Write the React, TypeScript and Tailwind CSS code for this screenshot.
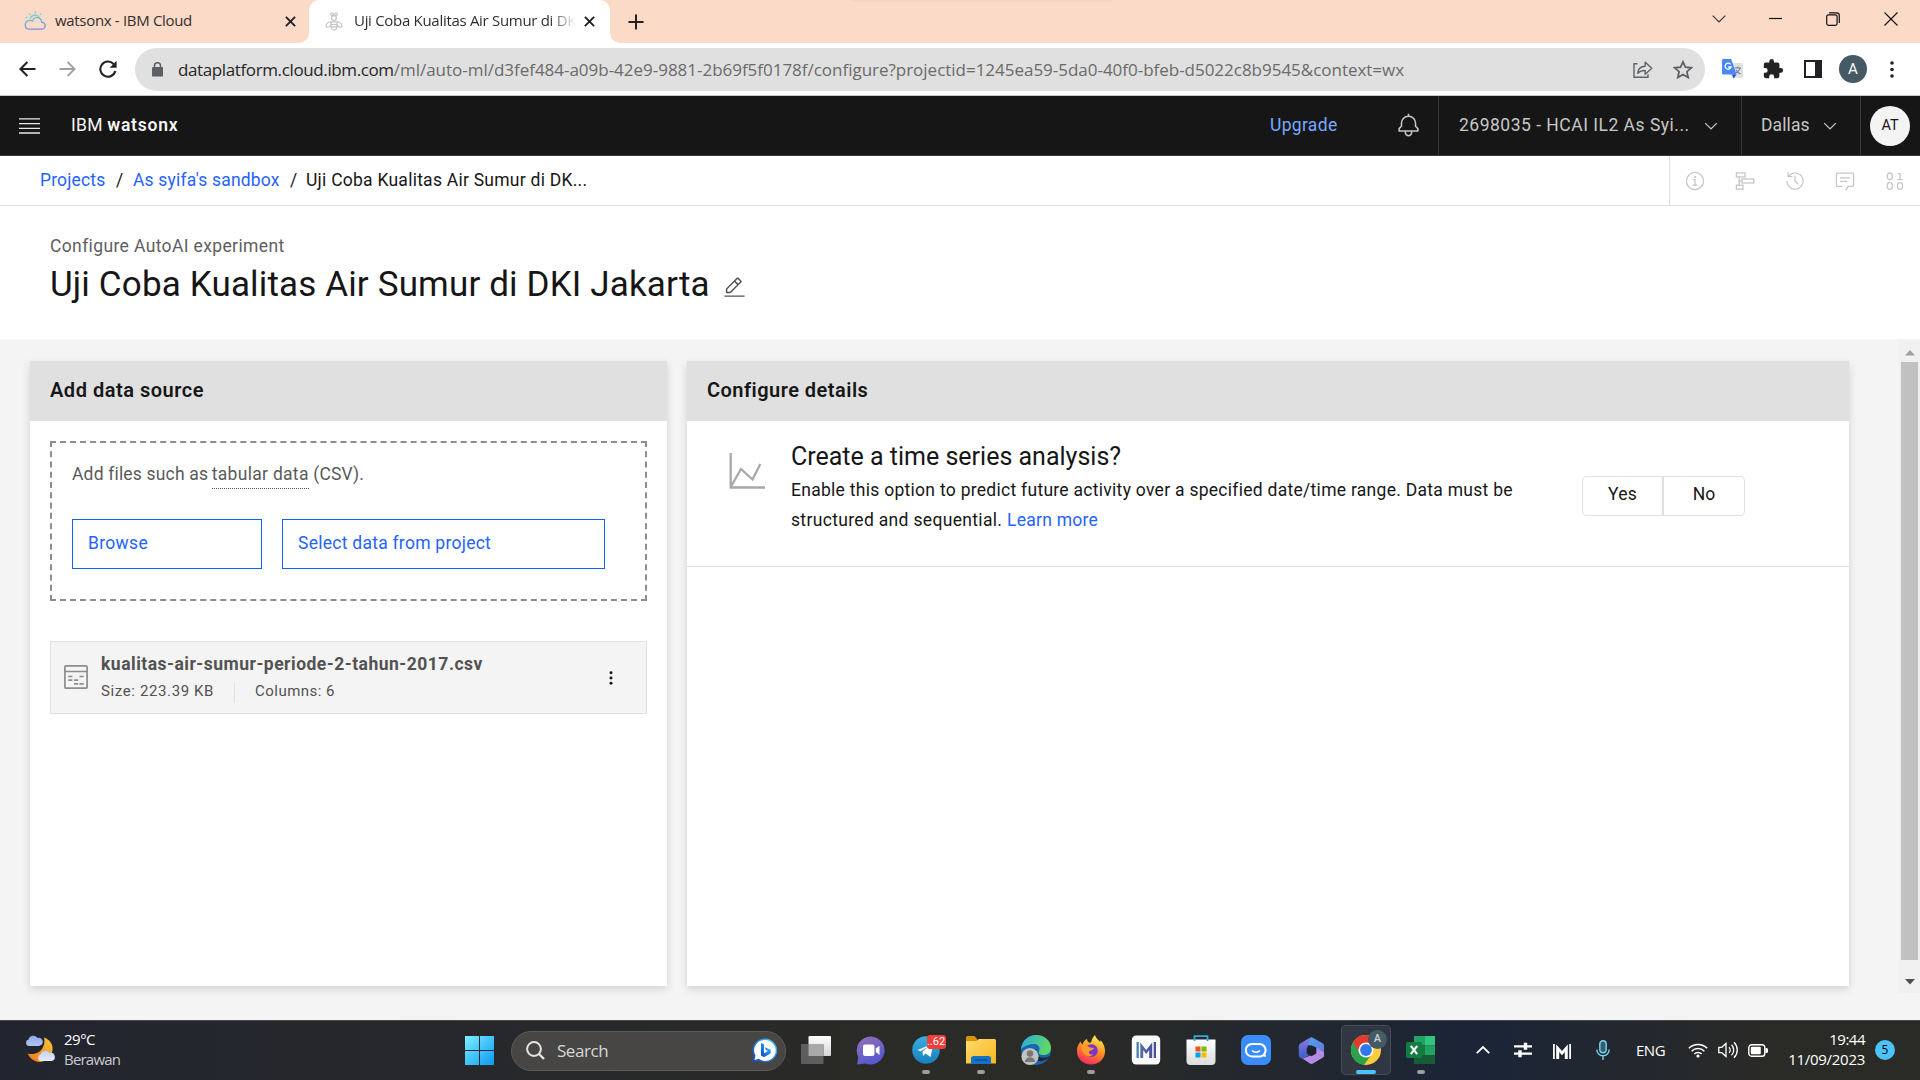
import React from 'react';

type IconProps = { className?: string };

const ChevronDown = ({ className = '' }: IconProps) => (
  <svg viewBox="0 0 16 16" fill="currentColor" className={className}>
    <path d="M8 11L3 6 3.7 5.3 8 9.6 12.3 5.3 13 6z" />
  </svg>
);

const CloseX = ({ className = '' }: IconProps) => (
  <svg viewBox="0 0 10 10" className={className} stroke="#1f1f1f" strokeWidth="1.7">
    <path d="M0.8 0.8l8.4 8.4M9.2 0.8L0.8 9.2" />
  </svg>
);

const Dots = ({ className = '' }: IconProps) => (
  <svg viewBox="0 0 4 18" fill="currentColor" className={className}>
    <circle cx="2" cy="2.2" r="1.9" />
    <circle cx="2" cy="9" r="1.9" />
    <circle cx="2" cy="15.8" r="1.9" />
  </svg>
);

/* ---------- Browser chrome ---------- */

function TabStrip() {
  return (
    <div className="flex h-[43px] items-stretch bg-[#fbdac7]">
      <div className="flex w-[299px] items-center pl-6">
        <svg viewBox="0 0 22 20" className="mb-[2px] h-5 w-[22px]" fill="none" strokeWidth="1.3">
          <defs>
            <linearGradient id="cloud" x1="0" y1="0" x2="0.3" y2="1">
              <stop offset="0" stopColor="#5ac8d8" />
              <stop offset="1" stopColor="#7d8fe0" />
            </linearGradient>
          </defs>
          <path d="M4.5 18.2h13a3.4 3.4 0 0 0 .4-6.8 6 6 0 0 0-1.7-3.7A4.6 4.6 0 0 0 8.6 10a4.3 4.3 0 0 0-4.1-.3 4.3 4.3 0 0 0-3.2 4.5 4 4 0 0 0 3.2 4z" stroke="url(#cloud)" />
          <path d="M6 7.5a5.6 5.6 0 0 1 9-1.8M11.5.6v2M5.3 2.6l1 1.6M1.6 6.2l1.8.9M17.2 2.5l-1 1.5" stroke="#6fd0d6" />
        </svg>
        <span className="mb-[2px] ml-[9px] w-[229px] text-[15px] tracking-[-0.32px] whitespace-nowrap text-[#33302e]">watsonx - IBM Cloud</span>
        <CloseX className="ml-px h-[11px] w-[11px]" />
      </div>
      <div className="flex w-[10px] flex-col justify-end bg-white">
        <div className="h-full rounded-br-[10px] bg-[#fbdac7]" />
      </div>
      <div className="flex w-[301px] items-center rounded-t-[10px] bg-white pl-[15px]">
        <svg viewBox="0 0 20 22" className="mb-px h-[19px] w-5" fill="none" stroke="#c2c2c2" strokeWidth="1.3">
          <circle cx="7.6" cy="2.4" r="1.6" />
          <circle cx="12.4" cy="2.4" r="1.6" />
          <circle cx="10" cy="7" r="2.8" />
          <path d="M6.6 11.5h6.8v6a3.4 3.4 0 0 1-6.8 0zM6.6 14.4h6.8M6.6 17.2h6.8M6.4 11.6C3 11 .9 14 .9 16c0 2.3 4.2 2.4 5.500-1.400M13.6 11.6C17 11 19.100 14 19.100 16c0 2.300-4.200 2.400-5.500-1.400" />
        </svg>
        <span className="mb-[2px] ml-[10px] w-[222px] bg-linear-to-r from-[#2b2b2b] from-88% to-transparent bg-clip-text text-[15px] tracking-[-0.300px] whitespace-nowrap text-transparent">Uji Coba Kualitas Air Sumur di DK</span>
        <CloseX className="ml-[8px] h-[11px] w-[11px]" />
      </div>
      <div className="bg-white">
        <div className="flex h-full items-center rounded-bl-[10px] bg-[#fbdac7] pl-[18px]">
          <svg viewBox="0 0 16 16" className="h-4 w-4" stroke="#222" strokeWidth="2"><path d="M8 0.5v15M.5 8h15" /></svg>
        </div>
      </div>
      <div className="ml-[208px] h-[3px] w-[260px] bg-linear-to-b from-[#f0d0c1] to-[#fbdac7]" />
      <div className="ml-auto flex h-[37px] items-center text-black">
        <svg viewBox="0 0 14 8" className="mr-[43px] h-2 w-3.5" fill="none" stroke="#333" strokeWidth="1.1"><path d="M.7.7L7 7l6.3-6.3" /></svg>
        <svg viewBox="0 0 13 13" className="mr-[44px] h-[13px] w-[13px]" stroke="#111" strokeWidth="1.2"><path d="M0 6.500h13" /></svg>
        <svg viewBox="0 0 14 14" className="mr-[44px] h-3.5 w-3.5" fill="none" stroke="#111" strokeWidth="1.2">
          <rect x=".7" y="2.9" width="10.400" height="10.400" rx="1.800" />
          <path d="M3 .8h7.600a2.700 2.700 0 0 1 2.700 2.700v7.400" />
        </svg>
        <svg viewBox="0 0 14 14" className="mr-[22px] h-3.5 w-3.5" stroke="#111" strokeWidth="1.1"><path d="M.5.5l13 13M13.500.5l-13 13" /></svg>
      </div>
    </div>
  );
}

function Toolbar() {
  return (
    <div className="flex h-[53px] items-center border-b border-[#c9c9c9] bg-white">
      <svg viewBox="0 0 17 16" className="ml-[19px] h-4 w-[17px]" fill="none" stroke="#222" strokeWidth="2"><path d="M16.5 8H1.8M8.4 1L1.4 8l7 7" /></svg>
      <svg viewBox="0 0 17 16" className="ml-[23px] h-4 w-[17px]" fill="none" stroke="#a0a0a0" strokeWidth="1.8"><path d="M.5 8h14.7M8.6 1l7 7-7 7" /></svg>
      <svg viewBox="0 0 18 18" className="ml-[23px] h-[18px] w-[18px]" fill="none" stroke="#222" strokeWidth="2.1">
        <path d="M16.3 11A7.6 7.6 0 1 1 14.6 4" />
        <path d="M17.6.8v6.9h-6.9z" fill="#222" stroke="none" />
      </svg>
      <div className="ml-[18px] flex h-[43px] w-[1570px] items-center rounded-full bg-[#e0e0e0] pl-[17px]">
        <svg viewBox="0 0 11 15" className="h-[15px] w-[11px]">
          <rect y="5" width="11" height="9.6" rx="1.2" fill="#5c5f63" />
          <path d="M2.5 6V3.8a3 3 0 0 1 6 0V6" fill="none" stroke="#5c5f63" strokeWidth="1.5" />
        </svg>
        <div className="mt-px ml-[15px] w-[1450px] text-[17px] whitespace-nowrap text-[#6a6a6a]">
          <span className="tracking-[-0.38px] text-[#262626]">dataplatform.cloud.ibm.com</span>
          <span className="tracking-[-0.02px]">/ml/auto-ml/d3fef484-a09b-42e9-9881-2b69f5f0178f/configure?projectid=1245ea59-5da0-40f0-bfeb-d5022c8b9545&amp;context=wx</span>
        </div>
        <svg viewBox="0 0 20 18" className="ml-[5px] h-[18px] w-5" fill="none" stroke="#5f6368" strokeWidth="1.4">
          <path d="M4.500 3.800H1v13.400h14v-3" />
          <path d="M4.800 13.200c.3-4.200 3-6.700 7.400-6.900V2.300l6.600 6-6.600 6v-3.800c-3.400 0-5.700.8-7.400 2.700z" strokeLinejoin="round" />
        </svg>
        <svg viewBox="0 0 20 19" className="ml-[20px] h-[19px] w-5" fill="none" stroke="#5a5d61" strokeWidth="1.7">
          <path d="M10 1.8l2.4 5.4 5.9.6-4.4 3.9 1.3 5.8-5.2-3.1-5.2 3.1 1.3-5.8L1.7 7.8l5.9-.6z" />
        </svg>
      </div>
      <svg viewBox="0 0 21 20" className="ml-[17px] h-5 w-[21px]">
        <rect x="9" y="4" width="12" height="15" rx="1.4" fill="#dfe1e3" />
        <path d="M12.5 9h6.5M15.700 7.500V9M18 9c-.5 2.600-2.500 4.300-5 5.600M14 11c1 2 2.300 3.200 4.600 4" stroke="#6b7f9c" strokeWidth="1.100" fill="none" />
        <path d="M1.400 0h7.800l5.300 15.500H1.400A1.400 1.400 0 0 1 0 14.100V1.400A1.400 1.400 0 0 1 1.400 0z" fill="#4788f4" />
        <path d="M10 15.500h4.500L11.600 19.500z" fill="#2f50c8" />
        <path d="M8.600 5.400A3 3 0 1 0 9 8H6.300" fill="none" stroke="#fff" strokeWidth="1.300" />
      </svg>
      <svg viewBox="0 0 24 24" className="ml-[19px] h-[22px] w-[22px]" fill="#222">
        <path d="M20.500 11H19V7a2 2 0 0 0-2-2h-4V3.500a2.500 2.500 0 0 0-5 0V5H4a2 2 0 0 0-2 2v3.800h1.500a2.700 2.700 0 0 1 0 5.400H2V20a2 2 0 0 0 2 2h3.800v-1.500a2.700 2.700 0 0 1 5.400 0V22H17a2 2 0 0 0 2-2v-4h1.500a2.500 2.500 0 0 0 0-5z" />
      </svg>
      <div className="ml-[20px] h-[18px] w-[18px] border-2 border-r-[7px] border-[#202124]" />
      <div className="ml-[17px] flex h-7 w-7 items-center justify-center rounded-full bg-[#455a64] font-['Roboto'] text-[15px] text-white">A</div>
      <Dots className="ml-[23px] h-[17px] w-1 text-[#222]" />
    </div>
  );
}

/* ---------- watsonx header ---------- */

function Header() {
  return (
    <header className="flex h-[60px] items-center border-b border-[#393939] bg-[#161616] text-[17.5px] whitespace-nowrap text-[#c6c6c6]">
      <svg viewBox="0 0 21 16" className="ml-[19px] h-4 w-[21px]" stroke="#e8e8e8" strokeWidth="1.300">
        <path d="M0 .9h21M0 5.600h21M0 10.300h21M0 15h21" />
      </svg>
      <div className="ml-[31px] w-[112px] text-[#f4f4f4]">
        <span className="tracking-[0.3px]">IBM</span> <span className="font-semibold tracking-[0.800px]">watsonx</span>
      </div>
      <span className="ml-auto w-[126px] tracking-[0.32px] text-[#78a9ff]">Upgrade</span>
      <svg viewBox="0 0 32 32" fill="currentColor" className="h-[25px] w-[25px]">
        <path d="M28.7071,19.293,26,16.5859V13a10.0136,10.0136,0,0,0-9-9.9492V1H15V3.0508A10.0136,10.0136,0,0,0,6,13v3.5859L3.2929,19.293A1,1,0,0,0,3,20v3a1,1,0,0,0,1,1h7v.7768a5.152,5.152,0,0,0,4.500,5.1987A5.0057,5.0057,0,0,0,21,25V24h7a1,1,0,0,0,1-1V20A1,1,0,0,0,28.7071,19.293ZM19,25a3,3,0,0,1-6,0V24h6Zm8-3H5V20.4141L7.707,17.707A1,1,0,0,0,8,17V13a8,8,0,0,1,16,0v4a1,1,0,0,0,.293.707L27,20.4141Z" />
      </svg>
      <div className="ml-[17px] flex h-full w-[303px] items-center border-l border-[#393939] pl-5">
        <span className="w-[242px] tracking-[0.5px]">2698035 - HCAI IL2 As Syi...</span>
        <ChevronDown className="h-5 w-5" />
      </div>
      <div className="flex h-full w-[119px] items-center border-l border-[#393939] pl-[19px]">
        <span className="w-[59px] tracking-[0.1px]">Dallas</span>
        <ChevronDown className="h-5 w-5" />
      </div>
      <div className="flex h-full w-[60px] items-center border-l border-[#393939] pl-[9px]">
        <div className="flex h-10 w-10 items-center justify-center rounded-full bg-[#f4f4f4] text-[14.500px] text-[#161616]">AT</div>
      </div>
    </header>
  );
}

function Breadcrumbs() {
  return (
    <div className="flex h-[50px] items-stretch border-b border-[#e0e0e0] bg-white text-[17.5px] whitespace-nowrap text-[#161616]">
      <div className="flex flex-1 items-center pl-[40px]">
        <span className="w-[76px] tracking-[0.15px] text-[#2563ff]">Projects</span>
        <span className="w-[17px]">/</span>
        <span className="w-[157px] tracking-[0.17px] text-[#2563ff]">As syifa's sandbox</span>
        <span className="w-[16px]">/</span>
        <span className="tracking-[0.25px]">Uji Coba Kualitas Air Sumur di DK...</span>
      </div>
      <div className="flex w-[251px] items-center gap-[30px] border-l border-[#e0e0e0] pl-[15px] text-[#c6c6c6]">
        <svg viewBox="0 0 20 20" className="h-5 w-5" fill="none" stroke="currentColor" strokeWidth="1.300">
          <circle cx="10" cy="10" r="8.600" />
          <path d="M8.200 8.700H10v5.200M7.600 14.200h4.800" />
          <circle cx="10" cy="5.800" r="1.100" fill="currentColor" stroke="none" />
        </svg>
        <svg viewBox="0 0 20 20" className="h-5 w-5" fill="none" stroke="currentColor" strokeWidth="1.300">
          <rect x="1.400" y="1.900" width="8.600" height="4" />
          <rect x="7" y="8" width="11.800" height="4" />
          <rect x="1.400" y="14.200" width="6.600" height="4" />
          <path d="M4.200 5.900v4.100H7M4.200 10v4.200" />
        </svg>
        <svg viewBox="0 0 32 32" className="h-5 w-5" fill="currentColor">
          <path d="M20.590 22L15 16.410V7h2v8.580l5 5.010z" />
          <path d="M16,2A13.940,13.940,0,0,0,6,6.230V2H4v8h8V8H7.080A12,12,0,1,1,4,16H2A14,14,0,1,0,16,2Z" />
        </svg>
        <svg viewBox="0 0 20 20" className="h-5 w-5" fill="none" stroke="currentColor" strokeWidth="1.300">
          <path d="M7.500 15.300H2.600a1.200 1.200 0 0 1-1.200-1.200V3.400a1.200 1.200 0 0 1 1.200-1.200h14.800a1.200 1.200 0 0 1 1.200 1.200v10.700a1.200 1.200 0 0 1-1.200 1.200h-4.200l-2.500 3.900M5 6.800h10M5 10.400h7" />
        </svg>
        <svg viewBox="0 0 20 20" className="h-5 w-5" fill="none" stroke="currentColor" strokeWidth="1.300">
          <rect x="2.300" y="2" width="5" height="6.600" rx="2.500" />
          <path d="M12.800 2.700h2.300v6M12.400 8.700h5.200" />
          <rect x="2.300" y="11.700" width="5" height="6.600" rx="2.500" />
          <rect x="12.500" y="11.700" width="5" height="6.600" rx="2.500" />
        </svg>
      </div>
    </div>
  );
}

function TitleArea() {
  return (
    <div className="flex h-[133px] flex-col bg-white pl-[50px] whitespace-nowrap">
      <div className="mt-[28px] h-6 text-[17.5px] leading-6 tracking-[0.37px] text-[#5e5e5e]">Configure AutoAI experiment</div>
      <div className="mt-[3px] flex h-[48px] items-center">
        <h1 className="w-[673px] text-[35px] leading-[48px] tracking-[0.15px] text-[#161616]">Uji Coba Kualitas Air Sumur di DKI Jakarta</h1>
        <svg viewBox="0 0 32 32" className="mt-[4px] h-[23px] w-[23px]" fill="#525252">
          <path d="M2 27h28v2H2zM25.400 9c.8-.8.8-2 0-2.800l-3.600-3.600c-.8-.8-2-.8-2.800 0l-15 15V24h6.400L25.400 9zM20.400 4L24 7.600l-3 3L17.400 7l3-3zM6 22v-3.600l10-10 3.600 3.600-10 10H6z" />
        </svg>
      </div>
    </div>
  );
}

/* ---------- Panels ---------- */

function DataSourcePanel() {
  return (
    <section className="flex h-[625px] w-[637px] flex-col bg-white shadow-[0_3px_8px_rgba(0,0,0,0.14)]">
      <div className="flex h-[60px] items-center bg-[#e0e0e0] pb-[2px] pl-5">
        <h2 className="text-[20px] font-semibold tracking-[0.52px] text-[#161616]">Add data source</h2>
      </div>
      <div className="flex flex-col px-5 pt-5">
        <div className="flex h-[160px] flex-col border-2 border-dashed border-[#8d8d8d] pl-5">
          <p className="mt-[19px] h-[29px] text-[17.5px] leading-[24px] tracking-[0.18px] text-[#5a5a5a]">
            Add files such as{' '}
            <span className="-ml-px inline-block h-[27px] border-b border-dotted border-[#525252] tracking-[0.300px]">tabular data</span> (CSV).
          </p>
          <div className="mt-[28px] flex gap-5 text-[17.5px] text-[#2563ff]">
            <button className="h-[50px] w-[190px] border border-[#0f62fe] pb-[2px] pl-[15px] text-left tracking-[0.32px]">Browse</button>
            <button className="h-[50px] w-[323px] border border-[#0f62fe] pb-[2px] pl-[15px] text-left tracking-[0.26px]">Select data from project</button>
          </div>
        </div>
        <div className="mt-10 flex h-[73px] items-center border border-[#e0e0e0] bg-[#f4f4f4] pl-[13px] text-[#525252]">
          <svg viewBox="0 0 24 24" className="mb-px h-6 w-6" fill="none" stroke="#8d8d8d" strokeWidth="1.700">
            <rect x=".9" y=".9" width="22.200" height="22.200" rx="1" />
            <path d="M.8 6.500h22.400M4.200 11.500h4.200M15.500 11.500h4.200M4.200 15.200h4.200M10 15.200h4.200M10 18.900h4.200M15.500 18.900h4.200" />
          </svg>
          <div className="ml-[13px] flex w-[500px] flex-col">
            <span className="text-[17.5px] leading-[26px] font-bold tracking-[0.5px] whitespace-nowrap">kualitas-air-sumur-periode-2-tahun-2017.csv</span>
            <div className="mt-px flex h-[26px] items-center text-[15px]">
              <span className="w-[133px] tracking-[0.62px]">Size: 223.39 KB</span>
              <span className="mt-1 h-5 w-px bg-[#e0e0e0]" />
              <span className="ml-5 tracking-[0.48px]">Columns: 6</span>
            </div>
          </div>
          <Dots className="ml-[8px] h-[14px] w-[4px] text-[#161616]" />
        </div>
      </div>
    </section>
  );
}

function DetailsPanel() {
  return (
    <section className="flex h-[625px] w-[1162px] flex-col bg-white shadow-[0_3px_8px_rgba(0,0,0,0.14)]">
      <div className="flex h-[60px] items-center bg-[#e0e0e0] pb-[2px] pl-5">
        <h2 className="text-[20px] font-semibold tracking-[0.47px] text-[#161616]">Configure details</h2>
      </div>
      <div className="flex h-[146px] border-b border-[#e0e0e0] text-[17.5px] text-[#161616]">
        <svg viewBox="0 0 36 36" className="mt-[32px] ml-[42px] h-9 w-9" fill="none" stroke="#a8a8a8" strokeWidth="2.300">
          <path d="M1.700 0v34.500H36M1.700 34L12 16l11.500 10.500L31.300 11" />
        </svg>
        <div className="ml-[26px] flex w-[740px] flex-col whitespace-nowrap">
          <h3 className="mt-[18px] text-[25px] leading-[36px]">Create a time series analysis?</h3>
          <p className="leading-[30px] tracking-[0.28px]">Enable this option to predict future activity over a specified date/time range. Data must be</p>
          <p className="leading-[30px] tracking-[0.33px]">structured and sequential. <a className="tracking-[0.25px] text-[#2563ff]">Learn more</a></p>
        </div>
        <div className="mt-[55px] ml-[51px] flex h-10 w-[163px] rounded-[5px] border border-[#e0e0e0]">
          <button className="h-full w-[81px] border-r-2 border-[#e0e0e0] pb-[3px] tracking-[0.2px]">Yes</button>
          <button className="h-full w-[80px] pb-[3px]">No</button>
        </div>
      </div>
    </section>
  );
}

function Scrollbar() {
  return (
    <div className="ml-auto flex h-[652px] w-[21px] flex-col items-center bg-[#f0f0f0]">
      <svg viewBox="0 0 10 6" className="mt-[9px] h-[6px] w-[10px]" fill="#a0a0a0"><path d="M5 0l5 5.500H0z" /></svg>
      <div className="mt-[6px] h-[598px] w-[17px] bg-[#c1c1c1]" />
      <svg viewBox="0 0 10 6" className="mt-[19px] h-[6px] w-[10px]" fill="#505050"><path d="M5 5.500L0 0h10z" /></svg>
    </div>
  );
}

/* ---------- Taskbar ---------- */

function AppSlot({ children, running, active }: { children: React.ReactNode; running?: boolean; active?: boolean }) {
  return (
    <div className={active ? 'relative mx-[2.500px] flex h-[50px] w-[50px] items-center justify-center rounded-[5px] border border-white/10 bg-white/8' : 'relative flex h-[50px] w-[55px] items-center justify-center'}>
      {children}
      {running && <span className="absolute bottom-px left-1/2 h-1 w-2 -translate-x-1/2 rounded-full bg-[#9b9b9b]" />}
      {active && <span className="absolute bottom-0 left-1/2 h-1 w-5 -translate-x-1/2 rounded-full bg-[#4cc2ff]" />}
    </div>
  );
}

function Apps() {
  return (
    <div className="mb-px ml-[2.500px] flex items-center">
      <AppSlot>
        <svg viewBox="0 0 30 28" className="h-7 w-[30px]">
          <defs><linearGradient id="tv" x1="0" y1="0" x2="0" y2="1"><stop offset="0" stopColor="#fff" /><stop offset="1" stopColor="#d5d5d5" /></linearGradient></defs>
          <rect x="7.500" width="22.500" height="20" rx="1" fill="url(#tv)" />
          <rect y="8" width="22.500" height="20" rx="1" fill="#5e5e5e" />
          <path d="M7.500 8h15v12h-15z" fill="#a9a9a9" />
        </svg>
      </AppSlot>
      <AppSlot>
        <svg viewBox="0 0 30 29" className="h-[29px] w-[30px]">
          <defs><linearGradient id="chat" x1="0" y1="0" x2="0.500" y2="1"><stop offset="0" stopColor="#9a6fb8" /><stop offset="1" stopColor="#5558cf" /></linearGradient></defs>
          <path d="M15 .5a14 14 0 1 1-5.600 27L1 28.500l1.300-7.500A14 14 0 0 1 15 .5z" fill="url(#chat)" />
          <rect x="7" y="8.500" width="11.500" height="11.500" rx="2" fill="#fff" />
          <path d="M19.800 12.500l3.700-2.800v9.200l-3.700-2.800z" fill="#fff" />
        </svg>
      </AppSlot>
      <AppSlot running>
        <svg viewBox="0 0 28 28" className="h-7 w-7">
          <defs><linearGradient id="tg" x1="0" y1="0" x2="0" y2="1"><stop offset="0" stopColor="#37aee2" /><stop offset="1" stopColor="#1780bd" /></linearGradient></defs>
          <circle cx="14" cy="14" r="13.800" fill="url(#tg)" />
          <path d="M5.500 14L21.500 7.500 18.500 21l-5-3.500-2.500 2.500-.5-4.500L17.500 10 8.500 15.200z" fill="#fff" />
        </svg>
        <span className="absolute top-[10px] left-[28px] h-[14px] w-[19px] rounded-[3px] bg-[#f23d3a] text-center font-['Roboto'] text-[11px] leading-[14px] text-white">..62</span>
      </AppSlot>
      <AppSlot running>
        <svg viewBox="0 0 30 28" className="h-7 w-[30px]">
          <defs><linearGradient id="fold" x1="0" y1="0" x2="1" y2="1"><stop offset="0" stopColor="#ffdb70" /><stop offset="1" stopColor="#f8b51c" /></linearGradient></defs>
          <path d="M0 1.500A1.500 1.500 0 0 1 1.500 0h7l3 3.500V7H0z" fill="#d69305" />
          <path d="M0 5h10.500l2.500-2h15.500A1.500 1.500 0 0 1 30 4.500V27.500H0z" fill="url(#fold)" />
          <path d="M5 28v-5.500A2.500 2.500 0 0 1 7.500 20h15a2.500 2.500 0 0 1 2.500 2.500V28z" fill="#1673c4" />
          <path d="M8.500 24h13" stroke="#0b4f8f" strokeWidth="1.300" />
        </svg>
      </AppSlot>
      <AppSlot>
        <svg viewBox="0 0 32 32" className="h-8 w-8">
          <defs>
            <linearGradient id="edge" x1="0" y1="0" x2="1" y2="0.300"><stop offset="0" stopColor="#2ba7e5" /><stop offset="1" stopColor="#5fd862" /></linearGradient>
          </defs>
          <circle cx="16" cy="16" r="15" fill="#1566b3" />
          <path d="M1 15C2 6 9 1 16 1c9 0 15 6 15 13 0 5-4 7-7 7-4 0-6-1.500-5-3.500 2-4-1-7.500-5-7.500C9 10 4 12 1 15z" fill="url(#edge)" />
          <path d="M31 21c-3 3-9 4-13 1-3-2-3-5-1-7-4 1-5 6-3 9 4 5 12 4 17-3z" fill="#24262a" />
          <circle cx="10" cy="22.500" r="8.600" fill="#c2c2c2" />
          <circle cx="10" cy="19.500" r="3.200" fill="#777" />
          <path d="M4.800 28a5.200 4.700 0 0 1 10.400 0z" fill="#777" />
        </svg>
      </AppSlot>
      <AppSlot running>
        <svg viewBox="0 0 30 32" className="h-8 w-[30px]">
          <defs>
            <linearGradient id="fx" x1="0.700" y1="0" x2="0.300" y2="1"><stop offset="0.100" stopColor="#ffe04a" /><stop offset="0.500" stopColor="#ff8a1e" /><stop offset="1" stopColor="#f5246b" /></linearGradient>
          </defs>
          <path d="M15 30.500C7 30.500 1 25 1 17c0-5 2-7 3.500-9.500.5 1.500 1 2 2 3C7.500 7.500 9 6 11 5c0 2 1 3 3 4 2-1 1.500-5 5-8 .5 3 4 5 5 7 .8-.3.500-2 .5-2C27 9 29 12.500 29 17c0 8-6 13.500-14 13.500z" fill="url(#fx)" />
          <circle cx="15.500" cy="16.500" r="6.300" fill="#7b35c9" />
          <path d="M5 12c4-2 7 0 8 1 1.500 1.200 4 .5 5 1-1 2.500-4 2-5 4-.5 1.500 1 3 4 2.500-4 4-11 1-12-8.500z" fill="#ff9a28" />
        </svg>
      </AppSlot>
      <AppSlot>
        <svg viewBox="0 0 30 30" className="h-[30px] w-[30px]">
          <defs><linearGradient id="mx" gradientUnits="userSpaceOnUse" x1="5" y1="0" x2="25" y2="0"><stop offset="0" stopColor="#4d86ad" /><stop offset="0.500" stopColor="#5058a6" /><stop offset="1" stopColor="#4a4f9c" /></linearGradient></defs>
          <rect x=".8" y=".5" width="28.400" height="29" rx="4.500" fill="#fafafa" />
          <path d="M5.500 7h2.300v16H5.500zM22.700 7H25v16h-2.300zM9.300 7.500l5.900 7.500 6-7.500V23h-3v-8l-3 4-3-4v8h-2.900z" fill="url(#mx)" />
        </svg>
      </AppSlot>
      <AppSlot>
        <svg viewBox="0 0 30 30" className="h-[30px] w-[30px]">
          <defs><linearGradient id="store" x1="0" y1="0" x2="0" y2="1"><stop offset="0" stopColor="#fff" /><stop offset="1" stopColor="#dcdcdc" /></linearGradient></defs>
          <path d="M.5 4.500h29V26a4 4 0 0 1-4 4h-21a4 4 0 0 1-4-4z" fill="url(#store)" />
          <path d="M8.500 6V1.200h13V6" fill="none" stroke="#2aa8e0" strokeWidth="1.800" />
          <path d="M9.500 11.500h5v5h-5z" fill="#f25022" /><path d="M15.500 11.500h5v5h-5z" fill="#7fba00" />
          <path d="M9.500 17.500h5v5h-5z" fill="#00a4ef" /><path d="M15.500 17.500h5v5h-5z" fill="#ffb900" />
        </svg>
      </AppSlot>
      <AppSlot>
        <svg viewBox="0 0 30 30" className="h-[30px] w-[30px]">
          <rect width="30" height="30" rx="7" fill="#3a8df8" />
          <path d="M22 20.300l2 .6-.7-2A6.200 6.200 0 0 0 19 9h-8a6.200 6.200 0 0 0 0 12.400h8.500a7 7 0 0 0 2.500-1.100z" fill="none" stroke="#fff" strokeWidth="2" strokeLinejoin="round" />
          <path d="M11 15.500c2 2.200 6 2.200 8 0" fill="none" stroke="#fff" strokeWidth="1.500" />
        </svg>
      </AppSlot>
      <AppSlot>
        <svg viewBox="0 0 28 30" className="h-[29px] w-[27px]">
          <defs>
            <linearGradient id="m1" x1="0" y1="0" x2="0" y2="1"><stop offset="0" stopColor="#8f7be8" /><stop offset="1" stopColor="#3a5bc8" /></linearGradient>
            <linearGradient id="m2" x1="0" y1="0" x2="1" y2="1"><stop offset="0" stopColor="#48a8ee" /><stop offset="1" stopColor="#6b6ee0" /></linearGradient>
          </defs>
          <path d="M14 1l-4 2-8 5a3 3 0 0 0-1.200 2.500V20a3 3 0 0 0 1.500 2.600L5 24l6-4-1-9z" fill="url(#m1)" />
          <path d="M14 1l11.500 6.500A3 3 0 0 1 27 10v12l-8-5v-5l-9-3z" fill="url(#m2)" />
          <path d="M5 23.500l12-5.500 2-6 8 5v3a3 3 0 0 1-1.500 2.600l-10 6a3 3 0 0 1-3 0z" fill="#b58be6" />
          <path d="M14 9.500l5 3v5.500l-5 3-5-3v-5.500z" fill="#1e2330" />
        </svg>
      </AppSlot>
      <AppSlot active>
        <svg viewBox="0 0 30 30" className="h-[30px] w-[30px]">
          <circle cx="15" cy="15" r="15" fill="#ffcd3a" />
          <path d="M15 15L2 7.500A15 15 0 0 0 13 29.900L21.500 18z" fill="#2ba24c" />
          <path d="M2 7.500A15 15 0 0 1 28 7.500L28.300 8.500H15L9 18z" fill="#e33b2e" />
          <circle cx="15" cy="15" r="7.600" fill="#fff" />
          <circle cx="15" cy="15" r="5.900" fill="#2f79ec" />
        </svg>
        <span className="absolute top-[4px] left-[26px] flex h-[19px] w-[19px] items-center justify-center rounded-full bg-[#455a64] font-['Roboto'] text-[11px] font-medium text-[#c9d0d3]">A</span>
      </AppSlot>
      <AppSlot running>
        <svg viewBox="0 0 30 29" className="h-[29px] w-[30px]">
          <path d="M8 0h11v9.500H8z" fill="#21a366" /><path d="M19 0h10v9.500H19z" fill="#33c481" />
          <path d="M8 9.500h11V19H8z" fill="#107c41" /><path d="M19 9.500h10V19H19z" fill="#21a366" />
          <path d="M8 19h21v9H8z" fill="#185c37" />
          <rect y="6" width="16" height="16" rx="1.500" fill="#107c41" />
          <path d="M4.800 9.800l6.400 8.400M11.200 9.800l-6.400 8.400" stroke="#fff" strokeWidth="2.100" />
        </svg>
      </AppSlot>
    </div>
  );
}

function Tray() {
  return (
    <div className="mb-px ml-auto flex items-center text-white">
      <svg viewBox="0 0 14 8" className="h-2 w-3.5" fill="none" stroke="#fff" strokeWidth="1.800"><path d="M.8 7.200L7 1l6.200 6.200" /></svg>
      <svg viewBox="0 0 18 16" className="ml-[24px] h-4 w-[18px]" fill="none" stroke="#fff" strokeWidth="2.200">
        <path d="M0 4.300h18M0 11.700h18" />
        <path d="M11.500.8v7M6 8.200v7" strokeWidth="3.400" />
      </svg>
      <svg viewBox="0 0 18 15" className="mt-[2px] ml-[21px] h-[15px] w-[18px]" fill="#fff">
        <path d="M0 0h1.800v15H0zM16.200 0H18v15h-1.800zM3.200.5L9 7l5.800-6.500V15h-3V8L9 11.300 6.200 8v7h-3z" />
      </svg>
      <svg viewBox="0 0 14 20" className="ml-[25px] h-5 w-3.5" fill="none" stroke="#7ed3ea" strokeWidth="1.400">
        <rect x="3.800" y=".8" width="6.400" height="12" rx="3.200" fill="#2f5f78" />
        <path d="M.8 9.500a6.200 6.200 0 0 0 12.400 0M7 15.700V20" />
      </svg>
      <span className="ml-[26px] w-[52px] text-[15px] tracking-[-0.500px]">ENG</span>
      <svg viewBox="0 0 20 15" className="h-[15px] w-5" fill="none" stroke="#fff" strokeWidth="1.500">
        <path d="M.8 5.200a13 13 0 0 1 18.400 0M3.600 8.200a9 9 0 0 1 12.800 0M6.300 11a5.200 5.200 0 0 1 7.400 0" />
        <circle cx="10" cy="13" r="1.600" fill="#fff" stroke="none" />
      </svg>
      <svg viewBox="0 0 20 18" className="ml-[10px] h-[18px] w-5" fill="none" stroke="#fff" strokeWidth="1.300">
        <path d="M.8 6.300h3L8 2.500v13L3.800 11.700h-3zM11 6.200a4 4 0 0 1 0 5.600M13.500 3.700a7.500 7.500 0 0 1 0 10.600M16 1.200a11 11 0 0 1 0 15.600" />
      </svg>
      <svg viewBox="0 0 20 13" className="ml-[10px] h-[13px] w-5">
        <rect x=".8" y=".8" width="16" height="11.400" rx="2.800" fill="none" stroke="#fff" strokeWidth="1.400" />
        <rect x="2.800" y="2.800" width="10" height="7.400" rx="1" fill="#fff" />
        <path d="M17.500 4h1a1.500 1.500 0 0 1 1.500 1.500v2A1.500 1.500 0 0 1 18.500 9h-1z" fill="#fff" />
      </svg>
      <div className="mb-[3px] w-[97px] text-right text-[15px] leading-5">
        <div className="tracking-[-0.500px]">19:44</div>
        <div className="tracking-[-0.280px]">11/09/2023</div>
      </div>
      <div className="mr-[25px] ml-[10px] flex h-5 w-5 items-center justify-center rounded-full bg-[#4cc2ff] text-[12px] text-black">5</div>
    </div>
  );
}

function Taskbar() {
  return (
    <footer className="flex h-[60px] items-center border-t border-[#46494a] bg-linear-to-r from-[#22252f] via-[#2a2a27] via-45% to-[#2a2a26] font-['Open_Sans',sans-serif]">
      <div className="flex h-full w-full items-center bg-linear-to-r from-transparent from-56% via-[#1b2537] via-77% to-transparent to-92%">
        <svg viewBox="0 0 30 28" className="mb-[3px] ml-[25px] h-7 w-[30px]">
          <defs>
            <linearGradient id="moon" x1="1" y1="0" x2="0" y2="1"><stop offset="0" stopColor="#f6c638" /><stop offset="1" stopColor="#f0761c" /></linearGradient>
            <linearGradient id="cl" x1="0" y1="0" x2="0" y2="1"><stop offset="0" stopColor="#8fa9ec" /><stop offset="1" stopColor="#e3ebff" /></linearGradient>
          </defs>
          <path d="M19 2.500C26 5 29 11 27 17.500 25 25 17 29 10 26c-4-1.700-6-4.500-7.300-7.500C8 20 14 18.500 17 14c2.300-3.500 3-7.500 2-11.500z" fill="url(#moon)" />
          <path d="M3.500 11a3.300 3.300 0 0 1 0-6.400A5 5 0 0 1 12.500 3a3.800 3.800 0 0 1 2.500 7.500l-1 .5zM16 26a3.300 3.300 0 0 1-.3-6.500 5 5 0 0 1 9-1.500 4 4 0 0 1 2 8z" fill="url(#cl)" />
        </svg>
        <div className="mb-[4px] ml-[9px] w-[401px] text-[15px] leading-5 text-white">
          <div className="tracking-[-0.500px]">29°C</div>
          <div className="tracking-[-0.800px] text-[#c9cbcd]">Berawan</div>
        </div>
        <svg viewBox="0 0 29 29" className="h-[29px] w-[29px]">
          <defs><linearGradient id="win" gradientUnits="userSpaceOnUse" x1="0" y1="0" x2="29" y2="29"><stop offset="0" stopColor="#7df0ff" /><stop offset="1" stopColor="#0a98f5" /></linearGradient></defs>
          <path d="M0 0h14v14H0zM15 0h14v14H15zM0 15h14v14H0zM15 15h14v14H15z" fill="url(#win)" />
        </svg>
        <div className="ml-[17px] flex h-10 w-[275px] items-center rounded-full border border-[#5c5b59] bg-[#474645] pl-[14px]">
          <svg viewBox="0 0 19 19" className="h-[19px] w-[19px]" fill="none" stroke="#e4e4e4" strokeWidth="2"><circle cx="8" cy="8" r="6.900" /><path d="M13 13l5 5" strokeWidth="2.300" /></svg>
          <span className="ml-[12px] w-[195px] text-[17px] tracking-[-0.450px] text-[#d6d6d6]">Search</span>
          <svg viewBox="0 0 25 25" className="h-[25px] w-[25px]">
            <defs><linearGradient id="bing" x1="0" y1="1" x2="1" y2="0"><stop offset="0" stopColor="#1545b8" /><stop offset="0.500" stopColor="#2087e8" /><stop offset="1" stopColor="#45d3ee" /></linearGradient></defs>
            <path d="M13 .5a12 12 0 1 1-6 22.300L.5 24.500 1.500 17A12 12 0 0 1 13 .5z" fill="url(#bing)" />
            <path d="M13.300 2a10.500 10.500 0 1 1-6.500 18.800L2.500 22l1-4.500A10.500 10.500 0 0 1 13.300 2z" fill="#fff" />
            <path d="M9 5l3 1.300v9l4-2.300-2.200-1-1-2.800 6 2.500v3.500L12 19.200 9 17.500z" fill="url(#bing)" />
          </svg>
        </div>
        <Apps />
        <Tray />
      </div>
    </footer>
  );
}

export default function App() {
  return (
    <div className="flex h-[1080px] w-[1920px] flex-col overflow-hidden bg-[#f4f4f4]">
      <div className="font-['Open_Sans',sans-serif]">
        <TabStrip />
        <Toolbar />
      </div>
      <div className="flex flex-1 flex-col font-['Roboto',sans-serif]">
        <Header />
        <Breadcrumbs />
        <TitleArea />
        <main className="flex flex-1 pl-[30px]">
          <div className="flex gap-5 pt-[22px]">
            <DataSourcePanel />
            <DetailsPanel />
          </div>
          <div className="ml-auto pt-[2px]">
            <Scrollbar />
          </div>
        </main>
      </div>
      <Taskbar />
    </div>
  );
}
